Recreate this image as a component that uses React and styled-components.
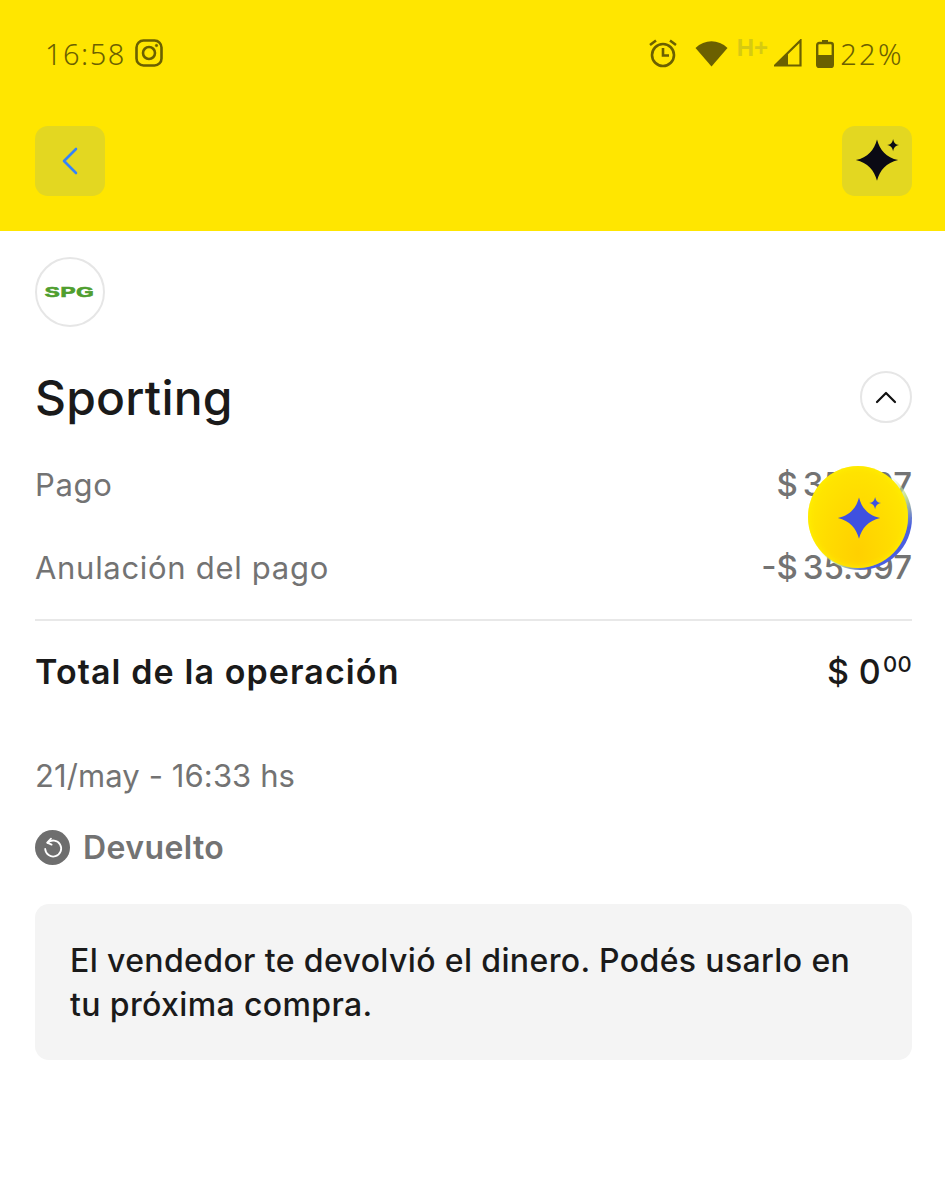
import React from 'react';
import styled, { createGlobalStyle } from 'styled-components';

const GlobalStyle = createGlobalStyle`
  html, body { margin: 0; padding: 0; background: #fff; }
  body { font-family: Inter, "Liberation Sans", sans-serif; }
  * { box-sizing: border-box; }
`;

const Page = styled.div`
  position: relative;
  width: 945px;
  height: 1200px;
  overflow: hidden;
  background: #fff;
`;

const Header = styled.header`
  height: 231px;
  background: #ffe600;
  padding: 35px 33px 35px 35px;
  display: flex;
  flex-direction: column;
  justify-content: space-between;
`;

const StatusBar = styled.div`
  display: flex;
  justify-content: space-between;
  align-items: center;
  height: 36px;
  padding: 0 8px 0 10px;
  color: #6b6000;
  font-family: "Noto Sans", "DejaVu Sans", sans-serif;
  font-size: 29px;
  font-weight: 300;
  letter-spacing: 1.5px;
`;

const StatusGroup = styled.div`
  display: flex;
  align-items: center;
  gap: ${p => p.$gap || 0}px;
`;

const Slot = styled.span`
  display: flex;
  align-items: center;
  margin-left: ${p => p.$left || 0}px;
`;

const Percent = styled.span`
  letter-spacing: 2.4px;
  margin-left: 6px;
`;

const NavRow = styled.div`
  display: flex;
  justify-content: space-between;
`;

const NavButton = styled.div`
  width: 70px;
  height: 70px;
  border-radius: 13px;
  background: #e3d721;
  display: flex;
  align-items: center;
  justify-content: center;
`;

const Content = styled.main`
  padding: 26px 33px 0 35px;
`;

const LogoCircle = styled.div`
  width: 70px;
  height: 70px;
  border-radius: 50%;
  border: 2px solid #e6e6e6;
  display: flex;
  align-items: center;
  justify-content: center;
  overflow: hidden;
`;

const LogoText = styled.span`
  color: #4f9e2f;
  font-family: "Liberation Sans", sans-serif;
  font-weight: 700;
  font-size: 14px;
  line-height: 1;
  letter-spacing: 0.5px;
  -webkit-text-stroke: 0.7px #4f9e2f;
  transform: scaleX(1.6);
`;

const TitleRow = styled.div`
  display: flex;
  justify-content: space-between;
  align-items: center;
  margin-top: 44px;
  height: 52px;
`;

const Title = styled.h1`
  margin: 0;
  padding-top: 2px;
  font-size: 48px;
  font-weight: 500;
  letter-spacing: 0.2px;
  color: #1a1a1a;
  line-height: 52px;
`;

const Collapse = styled.div`
  width: 52px;
  height: 52px;
  border-radius: 50%;
  border: 2px solid #e6e6e6;
  display: flex;
  align-items: center;
  justify-content: center;
`;

const Row = styled.div`
  display: flex;
  justify-content: space-between;
  align-items: center;
  height: 44px;
  margin-top: 39px;
  font-size: 31px;
  letter-spacing: 0.7px;
  color: #737373;
`;

const Price = styled.span`
  font-weight: 500;
  font-size: 33px;
  letter-spacing: 0;
  word-spacing: -4px;
`;

const Divider = styled.hr`
  border: 0;
  height: 2px;
  margin: 30px 0 0;
  background: #e8e8e8;
`;

const TotalRow = styled.div`
  display: flex;
  justify-content: space-between;
  align-items: center;
  height: 44px;
  margin-top: 28px;
  font-size: 34px;
  font-weight: 600;
  letter-spacing: 1.1px;
  color: #1a1a1a;
`;

const Amount = styled.span`
  display: flex;
  align-items: flex-start;
  font-size: 34px;
  font-weight: 500;
  letter-spacing: 0.3px;
`;

const Cents = styled.sup`
  font-size: 22px;
  font-weight: 500;
  line-height: 1;
  margin: 2px 0 0 2px;
  vertical-align: baseline;
`;

const DateText = styled.div`
  margin-top: 61px;
  height: 44px;
  line-height: 44px;
  font-size: 31px;
  letter-spacing: 0.1px;
  color: #737373;
`;

const StatusRow = styled.div`
  display: flex;
  align-items: center;
  gap: 13px;
  margin-top: 27px;
  height: 44px;
  font-size: 32px;
  font-weight: 600;
  letter-spacing: 0.4px;
  color: #737373;
`;

const Note = styled.div`
  margin-top: 35px;
  height: 156px;
  padding: 35px;
  border-radius: 14px;
  background: #f4f4f4;
  font-size: 32px;
  font-weight: 500;
  letter-spacing: 0.37px;
  line-height: 44px;
  color: #1a1a1a;
`;

const Fab = styled.div`
  position: absolute;
  left: 808px;
  top: 466px;
  width: 104px;
  height: 104px;
  border-radius: 50%;
  background: linear-gradient(135deg, transparent 45%, #c7e08f 62%, #4a5fe0 78%);
`;

const FabInner = styled.div`
  width: 100px;
  height: 102px;
  padding: 3px 0 0 2px;
  border-radius: 50%;
  background: radial-gradient(ellipse at 50% 85%, #ffd000 0%, #ffdc00 45%, #ffe600 75%);
  box-shadow: inset 0 0 6px #fff200;
  display: flex;
  align-items: center;
  justify-content: center;
`;

const Sparkles = ({ color, size }) => (
  <svg width={size} height={size} viewBox="-3 3 50 50" fill={color}>
    <path d="M22 4.5 C25 16 32 24 45 27 C32 30 25 38 22 49.5 C19 38 12 30 -1 27 C12 24 19 16 22 4.5 Z" />
    <path d="M39.5 4 C40.3 8 42 10 46 10.7 C42 11.4 40.3 13.5 39.5 17.5 C38.7 13.5 37 11.4 33 10.7 C37 10 38.7 8 39.5 4 Z" />
  </svg>
);

const Instagram = () => (
  <svg width="28" height="28" viewBox="0 0 28 28" fill="none" stroke="#6b6000" strokeWidth="2.6">
    <rect x="1.5" y="1.5" width="25" height="25" rx="7" />
    <circle cx="14" cy="14" r="6" />
    <circle cx="21.5" cy="6.5" r="1.2" fill="#6b6000" strokeWidth="0.6" />
  </svg>
);

const Alarm = () => (
  <svg width="30" height="30" viewBox="0 0 30 30" fill="none" stroke="#6b6000" strokeWidth="2.6">
    <circle cx="15" cy="17" r="11" />
    <path d="M15 10 V17.5 H21" />
    <path d="M2 7 L8 2.5 M28 7 L22 2.5" />
  </svg>
);

const Wifi = () => (
  <svg width="33" height="28" viewBox="0 0 33 28" fill="#6b6000">
    <path d="M16.5 27.5 L0.5 9 C9.5 0 23.5 0 32.5 9 Z" />
  </svg>
);

const HPlus = styled.span`
  font-family: "Liberation Sans", sans-serif;
  font-size: 24px;
  font-weight: 700;
  color: #d6ca12;
  letter-spacing: 0;
  margin: -10px 0 0 9px;
`;

const Signal = () => (
  <svg width="28" height="28" viewBox="0 0 28 28" fill="none">
    <path d="M1 26.5 L26.5 1.5 V26.5 Z" stroke="#6b6000" strokeWidth="2.2" />
    <path d="M1 26.5 L14 14 V26.5 Z" fill="#6b6000" />
  </svg>
);

const Battery = () => (
  <svg width="18" height="29" viewBox="0 0 18 29" fill="none">
    <path d="M6 1 H12 V3 H6 Z" fill="#6b6000" />
    <rect x="1.2" y="4" width="15.6" height="24" rx="2" stroke="#6b6000" strokeWidth="2.4" />
    <rect x="1" y="16" width="16" height="12" rx="1" fill="#6b6000" />
  </svg>
);

const RefundIcon = () => (
  <svg width="35" height="35" viewBox="0 0 35 35" fill="none">
    <circle cx="17.5" cy="17.5" r="17.5" fill="#6e6e6e" />
    <path
      d="M12.6 12.8 A8 8 0 1 1 10.2 19"
      stroke="#fff"
      strokeWidth="1.8"
      strokeLinecap="round"
    />
    <path d="M16 8.6 L12.2 12.6 L16.6 14.6" stroke="#fff" strokeWidth="1.8" strokeLinecap="round" strokeLinejoin="round" />
  </svg>
);

export default function App() {
  return (
    <Page>
      <GlobalStyle />
      <Header>
        <StatusBar>
          <StatusGroup $gap={9}>
            <span>16:58</span>
            <Instagram />
          </StatusGroup>
          <StatusGroup>
            <Slot><Alarm /></Slot>
            <Slot $left={17}><Wifi /></Slot>
            <HPlus>H+</HPlus>
            <Slot $left={6}><Signal /></Slot>
            <Slot $left={14}><Battery /></Slot>
            <Percent>22%</Percent>
          </StatusGroup>
        </StatusBar>
        <NavRow>
          <NavButton>
            <svg width="18" height="28" viewBox="0 0 18 28" fill="none" stroke="#3483fa" strokeWidth="2.6" strokeLinecap="round" strokeLinejoin="round">
              <path d="M15 2 L3 14 L15 26" />
            </svg>
          </NavButton>
          <NavButton>
            <Sparkles color="#0a0a14" size={46} />
          </NavButton>
        </NavRow>
      </Header>
      <Content>
        <LogoCircle>
          <LogoText>SPG</LogoText>
        </LogoCircle>
        <TitleRow>
          <Title>Sporting</Title>
          <Collapse>
            <svg width="22" height="14" viewBox="0 0 22 14" fill="none" stroke="#111" strokeWidth="2.2" strokeLinecap="round" strokeLinejoin="round">
              <path d="M2 12 L11 3 L20 12" />
            </svg>
          </Collapse>
        </TitleRow>
        <Row>
          <span>Pago</span>
          <Price>$ 35.597</Price>
        </Row>
        <Row>
          <span>Anulación del pago</span>
          <Price>-$ 35.597</Price>
        </Row>
        <Divider />
        <TotalRow>
          <span>Total de la operación</span>
          <Amount>
            $ 0<Cents>00</Cents>
          </Amount>
        </TotalRow>
        <DateText>21/may - 16:33 hs</DateText>
        <StatusRow>
          <RefundIcon />
          <span>Devuelto</span>
        </StatusRow>
        <Note>El vendedor te devolvió el dinero. Podés usarlo en tu próxima compra.</Note>
      </Content>
      <Fab>
        <FabInner>
          <Sparkles color="#3f51e0" size={46} />
        </FabInner>
      </Fab>
    </Page>
  );
}
